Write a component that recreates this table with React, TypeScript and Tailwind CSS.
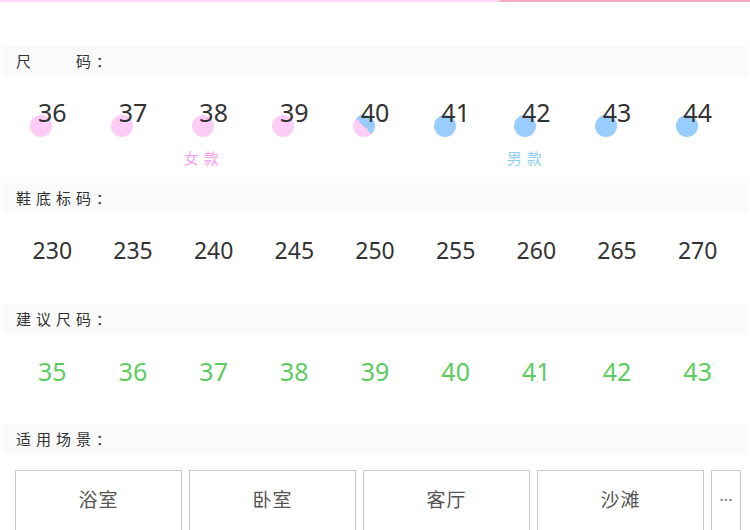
const font = { fontFamily: '"Noto Sans", "Noto Sans CJK SC", sans-serif' };

const sizes = ['36', '37', '38', '39', '40', '41', '42', '43', '44'];
const soles = ['230', '235', '240', '245', '250', '255', '260', '265', '270'];
const advised = ['35', '36', '37', '38', '39', '40', '41', '42', '43'];
const scenes = ['浴室', '卧室', '客厅', '沙滩'];

function Header({ title }: { title: string }) {
  return (
    <div className="mx-0.5 h-[30px] bg-[#fafafa] flex items-center pl-[14px] text-[15px] text-[#333] tracking-[5px]">
      {title}
    </div>
  );
}

function Dot({ size }: { size: string }) {
  const n = Number(size);
  let cls = 'bg-[#ffccf8]';
  if (n === 40) cls = 'bg-[linear-gradient(45deg,#ffccf8_50%,#99ccff_50%)]';
  if (n > 40) cls = 'bg-[#99ccff]';
  return <span className={`absolute left-[calc(50%-22px)] top-[39px] w-[22px] h-[22px] rounded-full ${cls}`} />;
}

export default function App() {
  return (
    <div className="w-[750px] h-[530px] overflow-hidden bg-white" style={font}>
      {/* top bar */}
      <div className="flex h-[2px]">
        <div className="w-[500px] bg-[#fdd6fa]" />
        <div className="flex-1 bg-[#f9a9c0]" />
      </div>

      <div className="h-[44px]" />
      <Header title="尺　　码：" />

      {/* sizes */}
      <div className="h-[107px] px-3">
        <div className="grid grid-cols-9">
          {sizes.map((s) => (
            <div key={s} className="relative flex justify-center h-[71px]">
              <Dot size={s} />
              <span className="relative mt-[21px] text-[25px] leading-[30px] text-[#333]">{s}</span>
            </div>
          ))}
        </div>
        <div className="grid grid-cols-9 text-[15px] tracking-[5px]">
          <div className="col-span-5 text-center pr-[20px] text-[#fb9df0]">女款</div>
          <div className="col-span-4 -ml-[80px] text-center pr-[20px] text-[#8ccff7]">男款</div>
        </div>
      </div>

      <Header title="鞋底标码：" />
      <div className="h-[91px] px-3 pt-[22px] grid grid-cols-9 items-start">
        {soles.map((s) => (
          <div key={s} className="text-center text-[23px] leading-[30px] text-[#333]">
            {s}
          </div>
        ))}
      </div>

      <Header title="建议尺码：" />
      <div className="h-[90px] px-3 pt-[22px] grid grid-cols-9 items-start">
        {advised.map((s, i) => (
          <div key={i} className="text-center text-[25px] leading-[30px] text-[#5ccc5e]">
            {s}
          </div>
        ))}
      </div>

      <Header title="适用场景：" />
      <div className="flex gap-[7px] pl-[15px] pt-[16px]">
        {scenes.map((s) => (
          <div
            key={s}
            className="w-[167px] h-[64px] shrink-0 border border-[#c9c9c9] flex items-center justify-center text-[19px] text-[#555] tracking-[1px] pb-[4px]"
          >
            {s}
          </div>
        ))}
        <div className="w-[30px] h-[64px] shrink-0 border border-[#c9c9c9] flex items-center justify-center text-[16px] leading-none text-[#777] pb-[4px]">
          ···
        </div>
      </div>
    </div>
  );
}
